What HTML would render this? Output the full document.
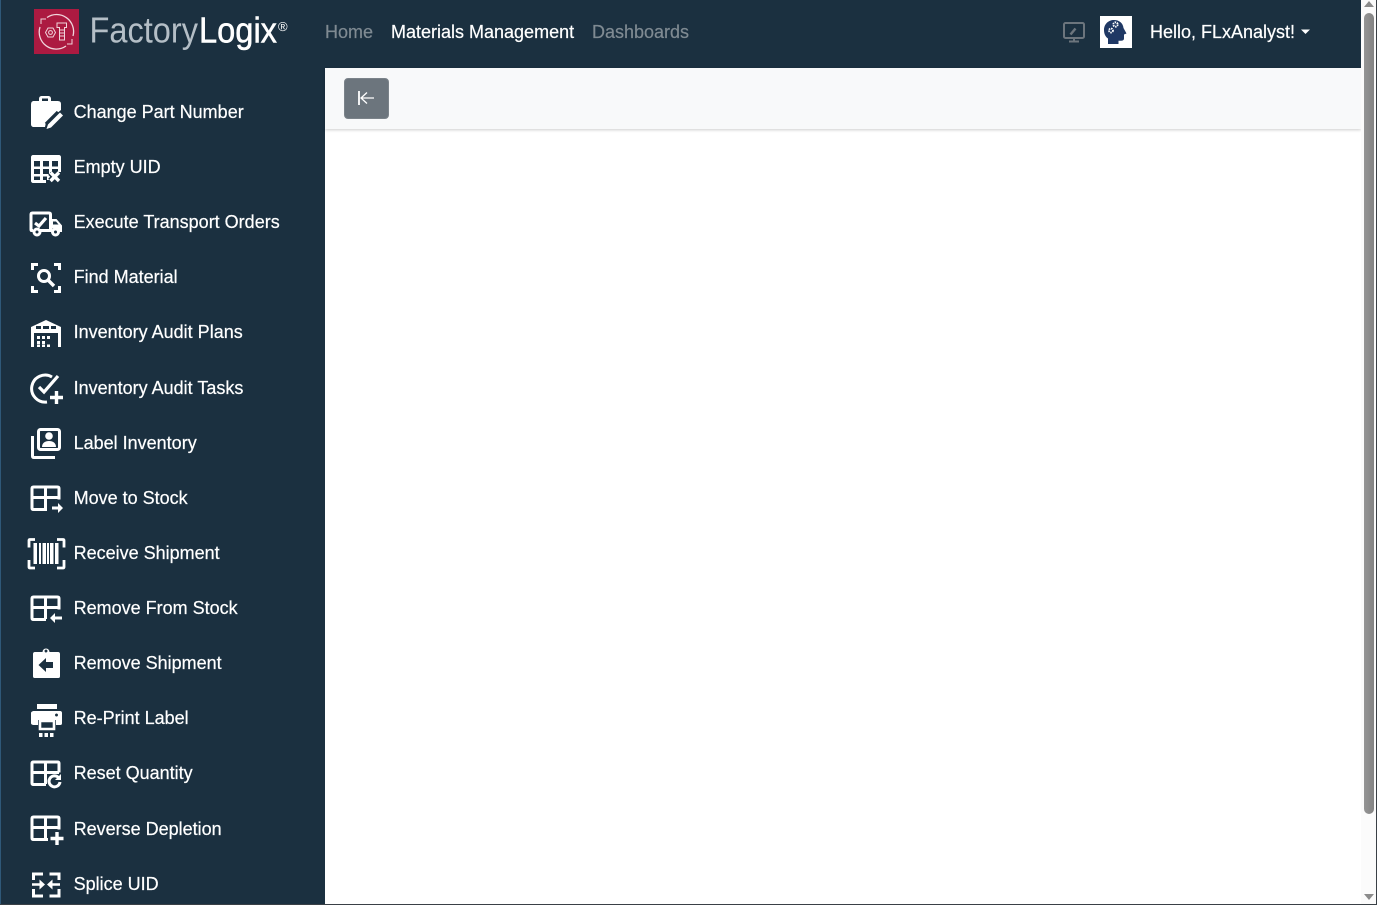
<!DOCTYPE html>
<html><head><meta charset="utf-8"><title>FactoryLogix</title>
<style>
html,body{margin:0;padding:0;width:1377px;height:905px;overflow:hidden;background:#fff;font-family:"Liberation Sans",sans-serif}
.abs{position:absolute}
#nav{left:0;top:0;width:1361px;height:68px;background:#1b3040}
#side{left:0;top:68px;width:325px;height:837px;background:#1b3040}
#bar{left:325px;top:68px;width:1036px;height:61px;background:#f8f9fa;box-shadow:0 1px 3px rgba(0,0,0,.2)}
#btn{left:343.500px;top:77.500px;width:45.500px;height:41.500px;background:#6c757d;border-radius:4px;border:1px solid #7b838a;box-sizing:border-box}
.t{position:absolute;font-size:18px;line-height:22px;white-space:nowrap;color:#fff;-webkit-text-stroke:.2px currentColor;margin-left:-.4px}
.n{margin-left:0}
.g{color:#7f8a92}
#sb{left:1361px;top:0;width:16px;height:905px;background:#fbfbfb}
#th{left:1364px;top:13px;width:10px;height:801px;background:linear-gradient(90deg,#959595,#838383);border-radius:5px}
#lb{left:0;top:0;width:1px;height:905px;background:#2f5878}
#bb{left:0;top:904px;width:1377px;height:1px;background:#3a4046}
#rb{left:1376px;top:0;width:1px;height:905px;background:#3a4046}
</style></head><body>
<div class="abs" id="nav"></div>
<div class="abs" id="side"></div>
<div class="abs" id="bar"></div>
<div class="abs" id="btn"></div>
<div class="abs" id="sb"></div>
<div class="abs" id="th"></div>
<div class="abs" id="lb"></div>

<div class="t g n" style="left:325px;top:21px">Home</div>
<div class="t n" style="left:391px;top:21px">Materials Management</div>
<div class="t g n" style="left:592px;top:21px">Dashboards</div>
<div class="t n" style="left:1150px;top:21px">Hello, FLxAnalyst!</div>

<div class="t" style="left:74px;top:101px">Change Part Number</div>
<div class="t" style="left:74px;top:156px">Empty UID</div>
<div class="t" style="left:74px;top:211px">Execute Transport Orders</div>
<div class="t" style="left:74px;top:266px">Find Material</div>
<div class="t" style="left:74px;top:321px">Inventory Audit Plans</div>
<div class="t" style="left:74px;top:377px">Inventory Audit Tasks</div>
<div class="t" style="left:74px;top:432px">Label Inventory</div>
<div class="t" style="left:74px;top:487px">Move to Stock</div>
<div class="t" style="left:74px;top:542px">Receive Shipment</div>
<div class="t" style="left:74px;top:597px">Remove From Stock</div>
<div class="t" style="left:74px;top:652px">Remove Shipment</div>
<div class="t" style="left:74px;top:707px">Re-Print Label</div>
<div class="t" style="left:74px;top:762px">Reset Quantity</div>
<div class="t" style="left:74px;top:818px">Reverse Depletion</div>
<div class="t" style="left:74px;top:873px">Splice UID</div>

<svg class="abs" style="left:0;top:0" width="1377" height="905" viewBox="0 0 1377 905" fill="none">
 <!-- logo -->
 <rect x="34" y="9" width="45" height="45" fill="#ac1a41"/>
 <g stroke="#f0d4db" stroke-width="1" fill="none">
  <path d="M47 17.500A17 17 0 0 1 73 36M66 46A17 17 0 0 1 40 27" stroke-width="1.300"/>
  <path d="M41 24v-5h5M72 39v5h-5"/>
  <path d="M57 23h9.500v4.500h-2v12.500h-5V27.500h-2.500z"/>
  <path d="M59.500 30h5M59.500 33h5M59.500 36h5"/>
  <path d="M48 28l5 0 2.500 4.500-2.500 4.500-5 0-2.500-4.500z"/>
  <circle cx="50.500" cy="32.500" r="1.900"/>
 </g>
 <text x="89.500" y="42.500" font-family="Liberation Sans" font-size="36" fill="#b4bec6" textLength="108.500" lengthAdjust="spacingAndGlyphs">Factory</text>
 <text x="199" y="42.500" font-family="Liberation Sans" font-size="36" fill="#fff" stroke="#fff" stroke-width=".5" textLength="78" lengthAdjust="spacingAndGlyphs">Logix</text>
 <text x="278" y="31" font-family="Liberation Sans" font-size="13" fill="#fff">®</text>

 <!-- top right monitor -->
 <g stroke="#6c757d" stroke-width="2">
  <rect x="1064" y="23" width="20" height="15" rx="1.500"/>
  <path d="M1074 38v3M1069 41.500h10"/>
  <path d="M1070.500 34.500l5-6" stroke-width="2.500"/>
 </g>
 <!-- avatar -->
 <rect x="1100" y="16" width="32" height="32" fill="#fff"/>
 <path d="M1108 44v-5.500c-2.800-2-4-5-4-8.500 0-6 4.500-10 10-10 5 0 9 3 9.500 8l3 5.500-2.500 1v4c0 1.500-1 2.200-3 2.200h-2.500V44z" fill="#1f3864"/>
 <circle cx="1115.500" cy="24.500" r="2.200" stroke="#fff" stroke-width="1.800" stroke-dasharray="1.500 .8"/>
 <circle cx="1111" cy="30.500" r="2" stroke="#fff" stroke-width="1.800" stroke-dasharray="1.500 .8"/>
 <path d="M1301 29.500h9l-4.500 4.500z" fill="#fff"/>

 <!-- back btn -->
 <path d="M359 91v14" stroke="#fff" stroke-width="1.800"/>
 <path d="M374 98h-13M367 92.500l-6 5.500 6 5.500" stroke="#fff" stroke-width="1.300"/>

 <!-- scrollbar arrows -->
 <path d="M1369 1l5 6h-10z" fill="#8b8b8b"/>
 <path d="M1364 894h10l-5 6z" fill="#8b8b8b"/>

 <g fill="#fff" stroke="#fff">
 <!-- change part number -->
 <path stroke="none" fill-rule="evenodd" d="M31 105c0-3 1-4 3-4h5v-2c0-2 1-3 3-3h6c2 0 3 1 3 3v2h6c3 0 4 1 4 3v6L46 122l-1 5H34c-2 0-3-1-3-3zM42 101h6v-2.500h-6z"/>
 <path fill="none" stroke="#1b3040" stroke-width="9" d="M60 114L48 126"/>
 <path stroke="none" d="M60 112.500l3 3-12 12-4.500 1.500 1.500-4.500z"/>
 <!-- empty uid -->
 <path stroke="none" fill-rule="evenodd" d="M33 155h26c1 0 2 1 2 2v15H50v8h-4v3H33c-1 0-2-1-2-2V157c0-1 1-2 2-2zM34 161v5.500h6V161zM43 161v5.500h6V161zM52 161v5.500h6V161zM34 169v5h6v-5zM43 169v5h6v-5zM52 169v3h6v-3zM34 176.500v3.500h6v-3.500zM43 176.500v3.500h4v-3.500z"/>
 <path fill="none" stroke="#1b3040" stroke-width="6.500" d="M50.500 172.500l8.500 8.500M59 172.500l-8.500 8.500"/>
 <path fill="none" stroke-width="3.400" d="M50.500 172.500l8.500 8.500M59 172.500l-8.500 8.500"/>
 <!-- transport -->
 <g fill="none" stroke-width="3">
  <path d="M33 230.500h-1.500c-.500 0-.5-.500-.5-1V214.500c0-1 .500-1.500 1.500-1.500H49c1 0 1.500 .500 1.500 1.500V231"/>
  <path stroke-width="3" d="M40 230.500h12"/>
  <circle cx="37" cy="232" r="3"/><circle cx="55.500" cy="232" r="3"/>
  <path stroke-width="3.200" d="M35 223l4 3 7-8"/>
 </g>
 <path stroke="none" d="M50 219h6.500l5.500 6.500v6.500h-3.500v-1.500l-4-2.500-4 1z"/>
 <path stroke="none" fill="#1b3040" d="M53 221.500h3l2.500 3h-5.500z"/>
 <!-- find -->
 <g fill="none" stroke-width="3">
  <path d="M32.500 270v-5.500H38M54 264.500h5.500V270M59.500 286v5.500H54M38 291.500h-5.500V286"/>
  <circle cx="44" cy="276" r="5.500"/><path stroke-width="3.400" d="M48 280l6 6"/>
 </g>
 <!-- audit plans -->
 <path stroke="none" fill-rule="evenodd" d="M46 320l15 7v20h-3v-14H34v14h-3v-20zM36 326v3h5v-3zM43 326v3h6v-3zM51 326v3h5v-3z"/>
 <path stroke="none" d="M37 336h3v3h-3zM42 336h3v3h-3zM47 336h3v3h-3zM37 341h3v3h-3zM42 341h3v3h-3zM37 344.500h3v2.500h-3zM42 344.500h3v2.500h-3zM47 344.500h3v2.500h-3z"/>
 <!-- audit tasks -->
 <g fill="none" stroke-width="3">
  <path d="M52 377a13.500 13.500 0 1 0-5 25"/>
  <path stroke-width="3.200" d="M39 387l5 5 14-16"/>
  <path stroke-width="3.400" d="M56.500 391v13M50 397.500h13"/>
 </g>
 <!-- label inventory -->
 <g fill="none" stroke-width="3">
  <rect x="38.500" y="429.500" width="21" height="20" rx="2"/>
  <path d="M32.500 436v20c0 1 .500 1.500 1.500 1.500H55"/>
 </g>
 <circle cx="49" cy="436" r="3.800" stroke="none"/>
 <path stroke="none" d="M42 447c0-4 3-6 7-6s7 2 7 6z"/>
 <!-- move to stock -->
 <g fill="none" stroke-width="3">
  <path d="M47 509.500H33.500c-1 0-1.500-.500-1.500-1.500V488.500c0-1 .500-1.500 1.500-1.500h24c1 0 1.500 .500 1.500 1.500v11"/>
  <path d="M32 497.500h27M45.500 487v22"/>
 </g>
 <path stroke="none" d="M52 506.500h6v-3.500l5 5-5 5v-3.500h-6z"/>
 <!-- receive -->
 <g fill="none" stroke-width="2.800">
  <path d="M35 539.500h-5c-.700 0-1 .300-1 1v7M57 539.500h6c.700 0 1 .300 1 1v7M29 560v7c0 .700.300 1 1 1h5M64 560v7c0 .700-.300 1-1 1h-6"/>
 </g>
 <path stroke="none" d="M33.500 543h3.500v21h-3.500zM39 543h2v21h-2zM42.500 543h3.500v21h-3.500zM47 543h2v21h-2zM50 543h3.500v21H50zM55 543h3.500v21H55z"/>
 <!-- remove from stock -->
 <g fill="none" stroke-width="3">
  <path d="M46 619.500H33.500c-1 0-1.500-.500-1.500-1.500V598.500c0-1 .500-1.500 1.500-1.500h24c1 0 1.500 .500 1.500 1.500v11"/>
  <path d="M32 607.500h27M45.500 597v22"/>
 </g>
 <path stroke="none" d="M62 616.500h-7v-3.500l-5 5 5 5v-3.500h7z"/>
 <!-- remove shipment -->
 <path stroke="none" fill-rule="evenodd" d="M35 652h7.500a3.500 3.500 0 0 1 7 0H58c1.500 0 2 1 2 2v22c0 1.500-.500 2-2 2H35c-1.500 0-2-.500-2-2v-22c0-1 .500-2 2-2zM46 649.500a1.500 1.500 0 1 0 .01 0zM46 658l-7.500 7 7.500 7v-4h7v-6h-7z"/>
 <!-- print -->
 <path stroke="none" d="M37 704h20v5H37z"/>
 <path stroke="none" fill-rule="evenodd" d="M34 711h26c1.500 0 2 1 2 2v10c0 1.500-.500 2-2 2h-4v-5H38v5h-4c-1.500 0-3-.500-3-2v-10c0-1 1.500-2 3-2zM56.500 713.500a1.500 1.500 0 1 0 .01 0z"/>
 <path fill="none" stroke-width="2.600" d="M40 721h14v8H40z"/>
 <path stroke="none" d="M39 733h3.500v4H39zM44.500 733H48v4h-3.500zM50 733h3.500v4H50z"/>
 <!-- reset quantity -->
 <g fill="none" stroke-width="3">
  <path d="M46 784.500H33.500c-1 0-1.500-.500-1.500-1.500V763.500c0-1 .500-1.500 1.500-1.500h24c1 0 1.500 .500 1.500 1.500v9"/>
  <path d="M32 772.500h27M45.500 762v22"/>
  <path d="M60 782a5.500 5.500 0 1 1-1.500-4.500"/>
 </g>
 <path stroke="none" d="M61 774v6h-6z"/>
 <!-- reverse depletion -->
 <g fill="none" stroke-width="3">
  <path d="M48 839.500H33.500c-1 0-1.500-.500-1.500-1.500V818.500c0-1 .500-1.500 1.500-1.500h24c1 0 1.500 .500 1.500 1.500v11"/>
  <path d="M32 827.500h27M45.500 817v22"/>
  <path stroke-width="3.400" d="M57 832v13M50.500 838.500h13"/>
 </g>
 <!-- splice -->
 <g fill="none" stroke-width="3">
  <path d="M43 874H33.500v6M49.500 874H59v6M33.500 889v7H43M59 889v7h-9.500"/>
  <path stroke-width="2.600" d="M32 884.500h9M60 884.500h-9"/>
 </g>
 <path stroke="none" d="M39.500 879.500l5.500 5-5.500 5zM52.500 879.500l-5.500 5 5.500 5z"/>
 </g>
</svg>
<div class="abs" id="bb"></div>
<div class="abs" id="rb"></div>
</body></html>
